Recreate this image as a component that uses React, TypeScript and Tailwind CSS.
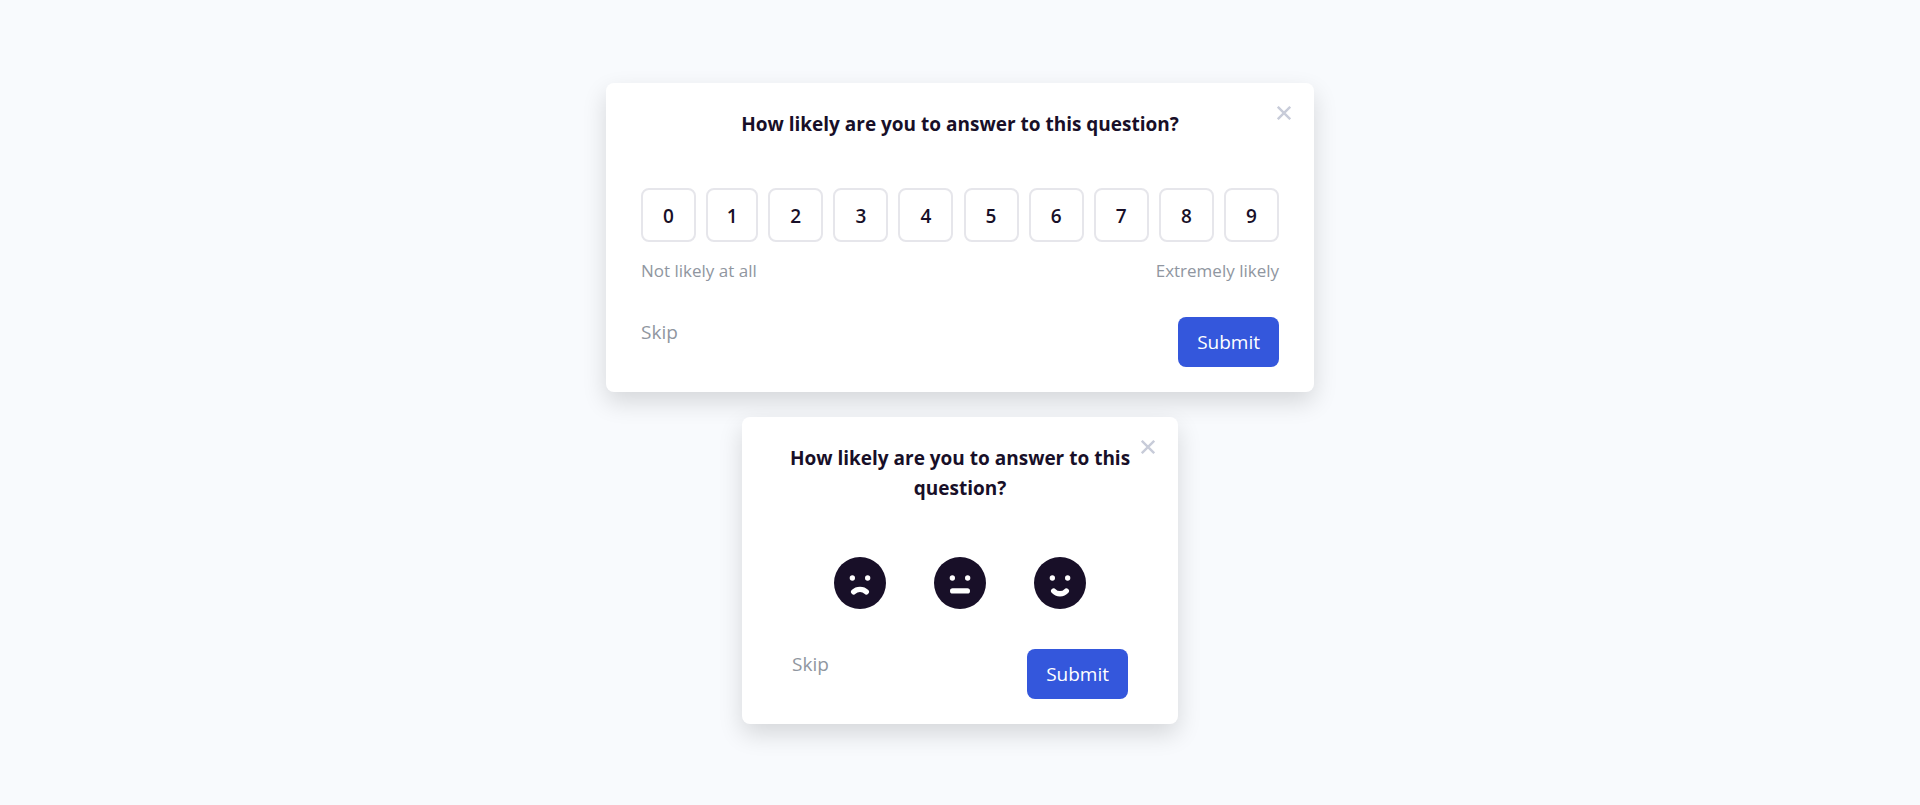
import { useState, type ReactNode } from "react";

const QUESTION = "How likely are you to answer to this question?";
const SCORES = [0, 1, 2, 3, 4, 5, 6, 7, 8, 9];

function Card({ className, children }: { className: string; children: ReactNode }) {
  return (
    <section
      className={`relative max-w-full rounded-lg bg-white py-[25px] shadow-[0_10px_25px_rgba(0,0,0,0.14)] ${className}`}
    >
      <button
        type="button"
        aria-label="Close"
        className="absolute top-[18px] right-[18px] flex size-6 items-center justify-center text-[#c8ccd9]"
      >
        <svg viewBox="0 0 14 14" className="size-[14px]" fill="none" stroke="currentColor" strokeWidth="2.4">
          <path d="M.8.8 13.2 13.2M13.2.8.8 13.2" />
        </svg>
      </button>
      <h2 className="-mx-3 pt-px text-center text-[19px] leading-[30px] font-bold">{QUESTION}</h2>
      {children}
    </section>
  );
}

function Actions() {
  return (
    <div className="flex items-start justify-between text-[19px] leading-[30px]">
      <button type="button" className="text-[#9096a0]">
        Skip
      </button>
      <button type="submit" className="rounded-lg bg-[#3457dc] px-[19px] py-[10px] text-white">
        Submit
      </button>
    </div>
  );
}

function Face({ mouth }: { mouth: string }) {
  return (
    <svg viewBox="0 0 53 53" className="size-[52px]">
      <circle cx="26.5" cy="26.5" r="26.5" fill="#180f28" />
      <circle cx="18.7" cy="21.4" r="2.7" fill="#fff" />
      <circle cx="34.3" cy="21.4" r="2.7" fill="#fff" />
      <path d={mouth} fill="none" stroke="#fff" strokeWidth="5.4" strokeLinecap="round" />
    </svg>
  );
}

const FACES = [
  { label: "Unhappy", mouth: "M20 35.6C23.4 32 29.6 32 33 35.6" },
  { label: "Neutral", mouth: "M19 34.6H34" },
  { label: "Happy", mouth: "M20 34.6C23.4 38.4 29.6 38.4 33 34.6" },
];

export default function App() {
  const [score, setScore] = useState<number | null>(null);
  const [face, setFace] = useState<string | null>(null);

  return (
    <main className="flex min-h-screen flex-col items-center justify-center gap-[25px] bg-[#f8fafd] pt-[2px] font-['Open_Sans','Noto_Sans',sans-serif] text-[#180f28]">
      <Card className="w-[708px] px-[35px]">
        <div className="mt-[49px] flex justify-between">
          {SCORES.map((n) => (
            <button
              key={n}
              type="button"
              aria-pressed={score === n}
              onClick={() => setScore(n)}
              className={`h-[54px] rounded-lg border-2 border-[#e6e6eb] pt-[2px] text-[19px] font-semibold ${n === 1 ? "w-[52px]" : "w-[55px]"}`}
            >
              {n}
            </button>
          ))}
        </div>
        <div className="mt-[15px] mb-[33px] flex justify-between text-[17px] leading-[27px] text-[#9096a0]">
          <span>Not likely at all</span>
          <span>Extremely likely</span>
        </div>
        <Actions />
      </Card>
      <Card className="w-[436px] px-[50px]">
        <div className="mt-[54px] mb-10 flex justify-center gap-12">
          {FACES.map(({ label, mouth }) => (
            <button
              key={label}
              type="button"
              aria-label={label}
              aria-pressed={face === label}
              onClick={() => setFace(label)}
            >
              <Face mouth={mouth} />
            </button>
          ))}
        </div>
        <Actions />
      </Card>
    </main>
  );
}
